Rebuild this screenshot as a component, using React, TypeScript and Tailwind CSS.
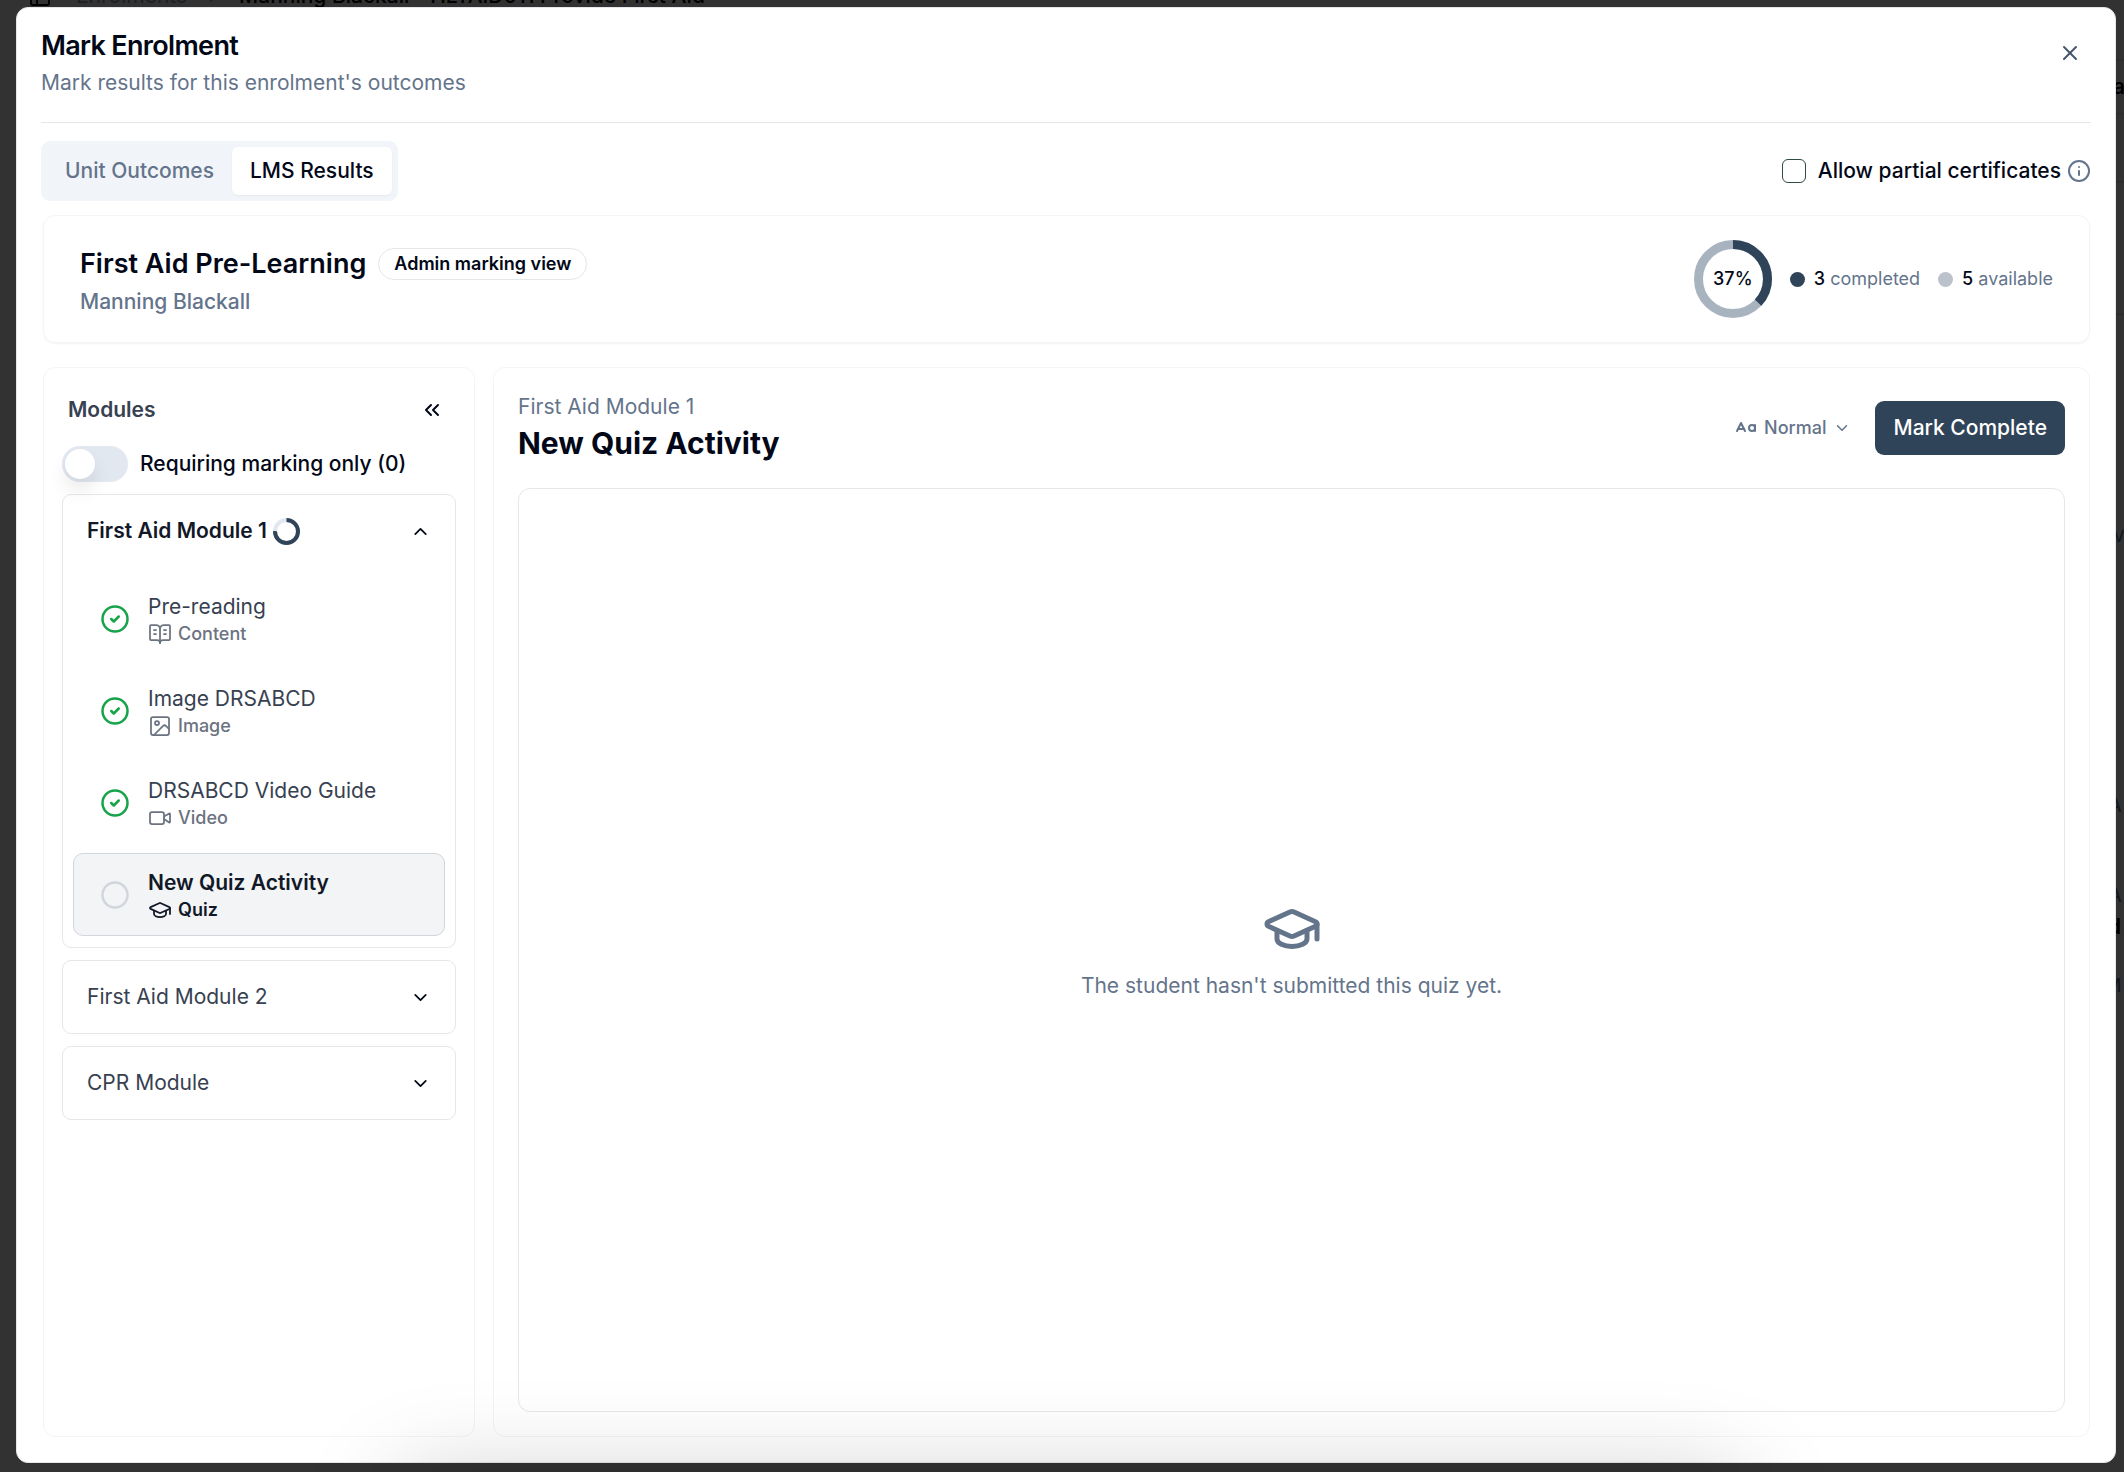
import { useState } from "react"
import {
    BookOpenText,
    ChevronDown,
    ChevronRight,
    ChevronUp,
    ChevronsLeft,
    Circle,
    CircleCheck,
    GraduationCap,
    Image,
    Info,
    PanelLeft,
    Video,
    X,
} from "lucide-react"

const activities = [
    { title: "Pre-reading", type: "Content", icon: BookOpenText, done: true },
    { title: "Image DRSABCD", type: "Image", icon: Image, done: true },
    { title: "DRSABCD Video Guide", type: "Video", icon: Video, done: true },
    { title: "New Quiz Activity", type: "Quiz", icon: GraduationCap, done: false },
]

const tabs = ["Unit Outcomes", "LMS Results"]

function Ring({ size, stroke, value, track, className }: {
    size: number
    stroke: number
    value: number
    track: string
    className?: string
}) {
    const r = (size - stroke) / 2
    const c = 2 * Math.PI * r

    return (
        <svg width={size} height={size} className={className} fill="none" aria-hidden="true">
            <g transform={`rotate(-90 ${size / 2} ${size / 2})`} strokeWidth={stroke}>
                <circle cx={size / 2} cy={size / 2} r={r} stroke={track} />
                <circle
                    cx={size / 2}
                    cy={size / 2}
                    r={r}
                    stroke="#2f4459"
                    strokeDasharray={`${c * value} ${c}`}
                />
            </g>
        </svg>
    )
}

function TextSizeIcon() {
    return (
        <svg
            viewBox="0 0 24 24"
            className="size-6"
            fill="none"
            stroke="currentColor"
            strokeWidth="2"
            strokeLinecap="round"
            strokeLinejoin="round"
            aria-hidden="true"
        >
            <path d="m3 15 4-8 4 8" />
            <path d="M4 13h6" />
            <circle cx="18" cy="12" r="3" />
            <path d="M21 9v6" />
        </svg>
    )
}

/* page that sits dimmed behind the dialog */
function Backdrop() {
    return (
        <div className="absolute inset-0 overflow-hidden" aria-hidden="true">
            <div className="absolute -top-5 left-7 flex items-center gap-6 whitespace-nowrap text-[21px] leading-8 text-[#1b2027]">
                <PanelLeft className="size-6 text-black" />
                <div className="flex items-center gap-4">
                    <span>Enrolments</span>
                    <ChevronRight className="size-5" />
                    <span className="font-medium text-black">Manning Blackall - HLTAID011 Provide First Aid</span>
                </div>
            </div>
            <div className="absolute top-15 right-0 h-[54px] w-3 border-y border-[#2b2b2b]" />
            <div className="absolute top-[181px] right-0 h-[134px] w-3 border-y border-[#2b2b2b]" />
            <span className="absolute top-[71px] left-[calc(100%-11px)] text-[21px] font-semibold text-black">an</span>
            <span className="absolute top-[519px] left-[calc(100%-11px)] text-[21px] text-[#14191f]">v</span>
            <span className="absolute top-[792px] left-[calc(100%-15px)] text-[18px] font-medium text-[#14191f]">A</span>
            <span className="absolute top-[882px] left-[calc(100%-15px)] text-[18px] font-medium text-[#14191f]">A</span>
            <span className="absolute top-[911px] left-[calc(100%-16px)] text-[21px] font-semibold text-black">d</span>
            <span className="absolute top-[972px] left-[calc(100%-19px)] text-[18px] font-medium text-[#14191f]">M</span>
        </div>
    )
}

function ModuleSidebar() {
    const [selected, setSelected] = useState("New Quiz Activity")
    const [open, setOpen] = useState(true)

    return (
        <aside className="w-[432px] shrink-0 rounded-xl border border-gray-100 p-[18px]">
            <div className="flex h-12 items-center justify-between pl-1.5">
                <h3 className="text-[21px] font-semibold text-[#374151]">Modules</h3>
                <button className="px-3" aria-label="Collapse modules">
                    <ChevronsLeft className="size-6" />
                </button>
            </div>

            <label className="mt-3 flex items-center gap-3 text-[21px] leading-9 font-medium">
                <span className="relative flex h-9 w-[66px]">
                    <input
                        type="checkbox"
                        role="switch"
                        className="peer h-9 w-[66px] appearance-none rounded-full bg-slate-200 checked:bg-[#2f4459]"
                    />
                    <span className="pointer-events-none absolute top-[3px] left-[3px] size-[30px] rounded-full bg-white shadow-[0_12px_20px_rgba(0,0,0,0.09)] peer-checked:left-[33px]" />
                </span>
                Requiring marking only (0)
            </label>

            <div className="mt-3 flex flex-col gap-3">
                <section className="rounded-[9px] border border-gray-200">
                    <button
                        onClick={() => setOpen(!open)}
                        aria-expanded={open}
                        className="flex h-[72px] w-full items-center gap-1.5 px-6 text-[21px] font-semibold text-[#111827]"
                    >
                        First Aid Module 1
                        <Ring size={27} stroke={4} value={0.75} track="#e2e8f0" />
                        <ChevronUp className="ml-auto size-[21px] text-[#020817]" />
                    </button>

                    {open && (
                        <ul className="flex flex-col gap-[9px] px-[10px] pt-[10px] pb-[11px]">
                            {activities.map(({ title, type, icon: Icon, done }) => {
                                const active = title === selected

                                return (
                                    <li key={title}>
                                        <button
                                            onClick={() => setSelected(title)}
                                            className={`flex w-full items-center gap-[18px] rounded-[10px] border px-[26px] py-[14px] text-left ${active
                                                ? "border-gray-300 bg-gray-100"
                                                : "border-transparent"
                                                }`}
                                        >
                                            {done
                                                ? <CircleCheck className="size-[30px] text-[#16a34a]" />
                                                : <Circle className="size-[30px] text-gray-300" />}
                                            <span>
                                                <span
                                                    className={`block text-[21px] leading-[30px] ${active
                                                        ? "font-semibold text-[#111827]"
                                                        : "text-[#374151]"
                                                        }`}
                                                >
                                                    {title}
                                                </span>
                                                <span
                                                    className={`flex h-[23px] items-center gap-1.5 text-[18px] leading-[23px] ${active
                                                        ? "font-semibold text-[#111827]"
                                                        : "font-medium text-[#6b7280]"
                                                        }`}
                                                >
                                                    <Icon className="size-6" strokeWidth={1.75} />
                                                    {type}
                                                </span>
                                            </span>
                                        </button>
                                    </li>
                                )
                            })}
                        </ul>
                    )}
                </section>

                {["First Aid Module 2", "CPR Module"].map((name) => (
                    <section key={name} className="rounded-[9px] border border-gray-200">
                        <button
                            aria-expanded={false}
                            className="flex h-[72px] w-full items-center justify-between px-6 text-[21px] text-[#374151]"
                        >
                            {name}
                            <ChevronDown className="size-[21px] text-[#020817]" />
                        </button>
                    </section>
                ))}
            </div>
        </aside>
    )
}

function ActivityPanel() {
    return (
        <section className="flex min-w-0 flex-1 flex-col rounded-xl border border-gray-100 p-6">
            <div className="flex items-center justify-between">
                <div>
                    <p className="text-[21px] leading-[30px] text-[#64748b]">First Aid Module 1</p>
                    <h2 className="text-[30px] leading-[42px] font-bold">New Quiz Activity</h2>
                </div>

                <div className="flex items-center gap-6">
                    <label className="flex items-center gap-1.5 text-[#64748b]">
                        <TextSizeIcon />
                        <span className="sr-only">Text size</span>
                        <span className="relative flex items-center">
                            <select className="field-sizing-content appearance-none pr-[25px] text-[18px] leading-6 font-medium">
                                <option>Normal</option>
                                <option>Large</option>
                            </select>
                            <ChevronDown className="pointer-events-none absolute right-0 size-[18px]" />
                        </span>
                    </label>
                    <button className="h-[54px] rounded-[9px] bg-[#2f4459] px-[18px] text-[21px] font-medium text-white">
                        Mark Complete
                    </button>
                </div>
            </div>

            <div className="mt-6 flex flex-1 flex-col items-center justify-center gap-3 rounded-xl border border-gray-200 text-[#64748b]">
                <GraduationCap className="size-[60px]" />
                <p className="text-[21px] leading-[30px]">The student hasn't submitted this quiz yet.</p>
            </div>
        </section>
    )
}

export default function App() {
    const [tab, setTab] = useState("LMS Results")

    return (
        <div className="relative flex h-screen overflow-hidden bg-[#323232] pt-[7px] pr-2 pb-[9px] pl-4 font-['Inter',sans-serif] text-[#020817]">
            <Backdrop />

            <div
                role="dialog"
                aria-labelledby="dialog-title"
                className="relative flex min-w-0 flex-1 flex-col rounded-xl border border-gray-200 bg-white px-6 pt-6 pb-[25px]"
            >
                {/* HEADER */}
                <header className="flex items-start justify-between border-b border-gray-200 pb-[23px]">
                    <div>
                        <h1 id="dialog-title" className="text-[27px] leading-[27px] font-semibold tracking-tight">
                            Mark Enrolment
                        </h1>
                        <p className="mt-2 text-[21px] leading-8 text-[#64748b]">
                            Mark results for this enrolment's outcomes
                        </p>
                    </div>
                    <button className="p-[9px] text-slate-600" aria-label="Close">
                        <X className="size-6" />
                    </button>
                </header>

                {/* TABS */}
                <div className="mt-[18px] flex items-center justify-between">
                    <div role="tablist" className="flex rounded-[9px] bg-slate-100 p-1.5">
                        {tabs.map((name) => (
                            <button
                                key={name}
                                role="tab"
                                aria-selected={tab === name}
                                onClick={() => setTab(name)}
                                className={`h-12 rounded-md px-[18px] text-[21px] font-medium ${tab === name
                                    ? "bg-white shadow-xs"
                                    : "text-[#64748b]"
                                    }`}
                            >
                                {name}
                            </button>
                        ))}
                    </div>

                    <div className="flex items-center gap-1.5">
                        <label className="flex items-center gap-3 text-[21px] font-medium">
                            <input
                                type="checkbox"
                                className="size-6 appearance-none rounded-md border border-[#2f4a40] checked:bg-[#2f4459]"
                            />
                            Allow partial certificates
                        </label>
                        <Info className="size-6 text-[#64748b]" />
                    </div>
                </div>

                <div className="mt-[14px] flex min-h-0 flex-1 flex-col gap-6 pr-px pl-0.5">
                    {/* SUMMARY */}
                    <section className="flex items-center justify-between rounded-xl border border-gray-100 px-9 py-6 shadow-xs">
                        <div className="flex flex-col gap-1 pt-[5px]">
                            <div className="flex items-center gap-3">
                                <h2 className="text-[27px] leading-9 font-semibold">First Aid Pre-Learning</h2>
                                <span className="rounded-full border border-gray-200 px-[15px] text-[18px] leading-[30px] font-semibold">
                                    Admin marking view
                                </span>
                            </div>
                            <p className="text-[21px] leading-8 font-medium text-[#64748b]">Manning Blackall</p>
                        </div>

                        <div className="flex items-center gap-[18px] text-[18px] text-[#64748b]">
                            <div className="relative flex size-[78px] items-center justify-center">
                                <Ring size={78} stroke={9} value={0.37} track="#a8b3c0" className="absolute inset-0" />
                                <span className="relative pb-0.5 font-medium text-[#020817]">37%</span>
                            </div>
                            <div className="flex items-center gap-[9px]">
                                <span className="size-[15px] rounded-full bg-[#2f4459]" />
                                <p className="pb-0.5"><span className="font-medium text-[#020817]">3</span> completed</p>
                            </div>
                            <div className="flex items-center gap-[9px]">
                                <span className="size-[15px] rounded-full bg-[#bcc2cc]" />
                                <p className="pb-0.5"><span className="font-medium text-[#020817]">5</span> available</p>
                            </div>
                        </div>
                    </section>

                    <div className="flex min-h-0 flex-1 gap-[18px]">
                        <ModuleSidebar />
                        <ActivityPanel />
                    </div>
                </div>
            </div>

            {/* soft shadow rising from the bottom edge */}
            <div className="pointer-events-none absolute top-[calc(100%+10px)] right-[384px] left-[400px] h-24 shadow-[0_0_100px_rgba(0,0,0,0.22)]" />
        </div>
    )
}
